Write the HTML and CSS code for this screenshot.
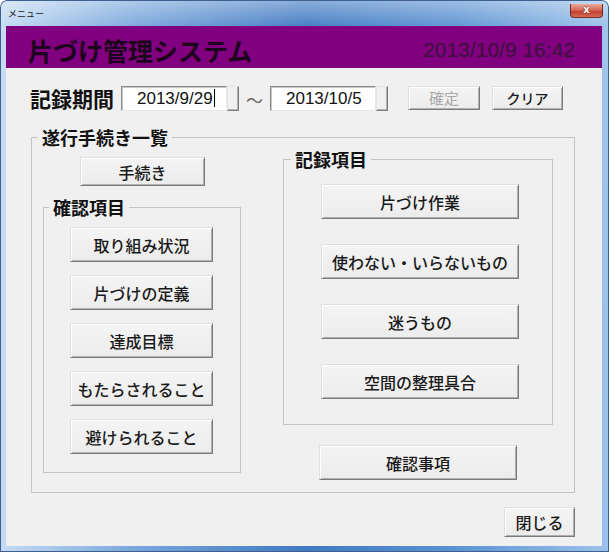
FILE: index.html
```html
<!DOCTYPE html>
<html lang="ja">
<head>
  <meta charset="UTF-8" />
  <meta name="viewport" content="width=device-width, initial-scale=1.0" />
  <title>メニュー</title>
  <link rel="stylesheet" href="styles.css">
</head>
<body>
  <div class="window">
    <div class="titlebar">
      <span class="caption">メニュー</span>
      <span class="close">x</span>
    </div>
    <div class="client">
      <div class="header">
        <h1 class="app-title">片づけ管理システム</h1>
        <span class="clock">2013/10/9 16:42</span>
      </div>
      <div class="content">
        <div class="period">
          <span class="period-label">記録期間</span>
          <div class="datebox">2013/9/29<span class="caret"></span></div>
          <button class="drop"></button>
          <span class="tilde">～</span>
          <div class="datebox">2013/10/5</div>
          <button class="drop"></button>
          <button class="btn btn-ok" disabled>確定</button>
          <button class="btn btn-clear">クリア</button>
        </div>

        <fieldset class="group group-main">
          <legend>遂行手続き一覧</legend>
          <div class="main-cols">
            <div class="col-left">
              <button class="btn btn-proc">手続き</button>
              <fieldset class="group group-check">
                <legend>確認項目</legend>
                <div class="stack stack-check">
                  <button class="btn btn-check">取り組み状況</button>
                  <button class="btn btn-check">片づけの定義</button>
                  <button class="btn btn-check">達成目標</button>
                  <button class="btn btn-check">もたらされること</button>
                  <button class="btn btn-check">避けられること</button>
                </div>
              </fieldset>
            </div>
            <div class="col-right">
              <fieldset class="group group-record">
                <legend>記録項目</legend>
                <div class="stack stack-record">
                  <button class="btn btn-record">片づけ作業</button>
                  <button class="btn btn-record">使わない・いらないもの</button>
                  <button class="btn btn-record">迷うもの</button>
                  <button class="btn btn-record">空間の整理具合</button>
                </div>
              </fieldset>
              <button class="btn btn-confirm">確認事項</button>
            </div>
          </div>
        </fieldset>

        <div class="footer">
          <button class="btn btn-close">閉じる</button>
        </div>
      </div>
    </div>
  </div>
</body>
</html>
```

FILE: styles.css
```css
body {
  margin: 0;
  background: #fff;
  font-family: "Noto Sans CJK JP", sans-serif;
}
.window {
  width: 609px;
  height: 552px;
  box-sizing: border-box;
  padding: 0 7px 6px 6px;
  display: flex;
  flex-direction: column;
  border-radius: 7px 7px 0 0;
  background:
    linear-gradient(to bottom, rgba(255,255,255,0.4), rgba(255,255,255,0.05) 26px, rgba(255,255,255,0) 100%),
    linear-gradient(to right, #c4dbf3, #7aa7dc 22%, #4179c2 50%, #5c93d2 75%, #9cc2ea);
  box-shadow: inset 0 0 0 1px #3d6090;
}
.titlebar {
  height: 26px;
  display: flex;
  justify-content: space-between;
  align-items: flex-start;
}
.caption {
  margin: 9px 0 0 2px;
  font-size: 9px;
  line-height: 10px;
  color: #1a1a1a;
}
.close {
  width: 33px;
  height: 14px;
  margin: 4px -1px 0 0;
  box-sizing: border-box;
  border: 1px solid #7a2a22;
  border-top: none;
  border-radius: 0 0 4px 4px;
  background: linear-gradient(to bottom, #e9a99a, #d2624f 50%, #c0412e 60%, #d46c55);
  color: #fff;
  font: bold 10px/12px "DejaVu Sans", sans-serif;
  text-align: center;
  text-shadow: 0 0 2px #5a1a12;
}
.client {
  flex: 1;
  display: flex;
  flex-direction: column;
  background: #f0f0f0;
}
.header {
  height: 42px;
  box-sizing: border-box;
  padding: 6px 27px 0 22px;
  display: flex;
  align-items: center;
  justify-content: space-between;
  background: #800080;
}
.app-title {
  margin: 0;
  font-size: 25px;
  font-weight: bold;
  line-height: 30px;
  color: #1c041c;
}
.clock {
  font-family: "Liberation Sans", sans-serif;
  font-size: 21px;
  color: #3a123a;
}
.content {
  padding: 18px 26px 0 24px;
}
.period {
  display: flex;
  align-items: flex-start;
  height: 25px;
}
.period-label {
  font-size: 21px;
  font-weight: bold;
  line-height: 25px;
  color: #111;
  margin-right: 6px;
  width: 85px;
}
.datebox {
  width: 106px;
  height: 25px;
  box-sizing: border-box;
  padding-left: 15px;
  background: #fff;
  border: 1px solid;
  border-color: #8a8a8a #e8e8e8 #e8e8e8 #8a8a8a;
  box-shadow: inset 1px 1px 0 #c8c8c8;
  font-family: "Liberation Sans", sans-serif;
  font-size: 17px;
  line-height: 23px;
  color: #111;
}
.caret {
  display: inline-block;
  width: 1px;
  height: 18px;
  margin-left: 1px;
  vertical-align: -3px;
  background: #000;
}
.drop {
  width: 12px;
  height: 25px;
  padding: 0;
  box-sizing: border-box;
  background: #f0f0f0;
  border: 1px solid;
  border-color: #e3e3e3 #7a7a7a #7a7a7a #e3e3e3;
  box-shadow: inset -1px -1px 0 #b4b4b4;
}
.tilde {
  width: 31px;
  text-align: center;
  font-size: 17px;
  line-height: 27px;
  color: #666;
}
.btn {
  box-sizing: border-box;
  padding: 0;
  background: linear-gradient(to bottom, #f4f4f4, #ececec);
  border: 1px solid;
  border-color: #e0e0e0 #7a7a7a #7a7a7a #e0e0e0;
  box-shadow: inset 1px 1px 0 #fff, inset -1px -1px 0 #b0b0b0;
  font-family: "Noto Sans CJK JP", sans-serif;
  font-size: 16px;
  font-weight: 500;
  color: #1a1a1a;
  height: 35px;
}
.btn:disabled {
  color: #a8a8a8;
  font-weight: 400;
}
.btn-ok {
  width: 72px;
  height: 24px;
  margin-left: 20px;
  font-size: 15px;
  line-height: 20px;
}
.btn-clear {
  width: 71px;
  height: 24px;
  margin-left: 12px;
  font-size: 14px;
  line-height: 20px;
}
.group {
  margin: 0;
  padding: 0;
  border: 1px solid #c4c4c4;
  min-width: 0;
}
.group legend {
  padding: 0 4px;
  font-size: 18px;
  font-weight: bold;
  line-height: 22px;
  color: #111;
}
.group-main {
  width: 544px;
  box-sizing: border-box;
  margin: 15px 0 0 1px;
}
.group-main legend {
  margin-left: 6px;
}
.main-cols {
  display: flex;
  gap: 42px;
  padding: 0 21px 12px 11px;
}
.col-left {
  width: 198px;
  display: flex;
  flex-direction: column;
  align-items: flex-start;
}
.col-right {
  width: 270px;
  display: flex;
  flex-direction: column;
  align-items: flex-start;
}
.btn-proc {
  width: 125px;
  height: 29px;
  margin: 9px 0 0 37px;
}
.group-check {
  width: 198px;
  box-sizing: border-box;
  margin-top: 10px;
}
.group-check legend {
  margin-left: 5px;
}
.group-record {
  width: 270px;
  box-sizing: border-box;
}
.group-record legend {
  margin-left: 7px;
}
.stack {
  display: flex;
  flex-direction: column;
  align-items: flex-start;
}
.stack-check {
  gap: 13px;
  padding: 9px 0 18px 26px;
}
.btn-check {
  width: 143px;
}
.stack-record {
  gap: 25px;
  padding: 14px 0 25px 37px;
}
.btn-record {
  width: 198px;
}
.btn-confirm {
  width: 198px;
  margin: 20px 0 0 36px;
}
.footer {
  display: flex;
  justify-content: flex-end;
  margin-top: 14px;
}
.btn-close {
  width: 71px;
  height: 30px;
  margin-right: 1px;
}
```
